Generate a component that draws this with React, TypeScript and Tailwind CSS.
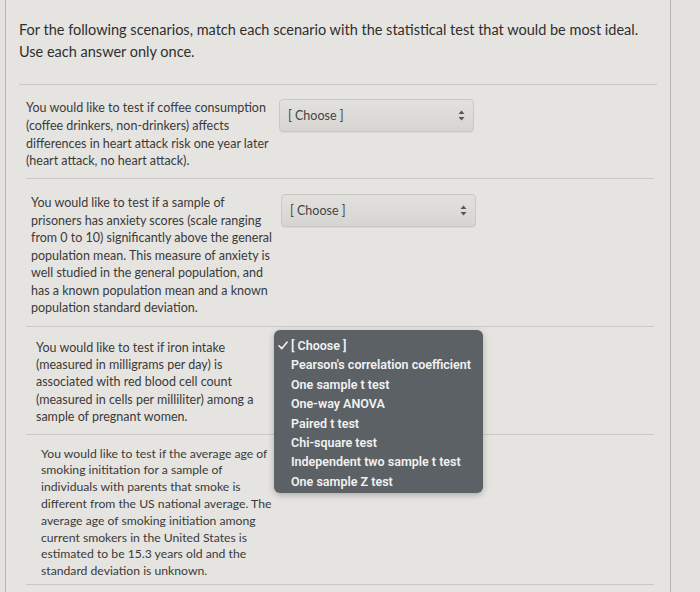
import React from "react";

function Select() {
  return (
    <div className="flex h-[33px] w-[195px] items-center justify-between rounded-[4px] border border-[#c9c8c4] bg-gradient-to-b from-[#e2e1de] to-[#d6d5d2] pl-[8px] pr-[8px] shadow-[0_1px_0_rgba(0,0,0,0.05)]">
      <span className="text-[12.5px] text-[#444]">[ Choose ]</span>
      <svg width="7" height="11" viewBox="0 0 7 11" className="text-[#555]">
        <path d="M3.5 0.5 L6.5 4 L0.5 4 Z" fill="currentColor" />
        <path d="M3.5 10.5 L6.5 7 L0.5 7 Z" fill="currentColor" />
      </svg>
    </div>
  );
}

function Lines({ lines }: { lines: string[] }) {
  return (
    <p>
      {lines.map((l, i) => (
        <React.Fragment key={i}>
          {l}
          {i < lines.length - 1 && <br />}
        </React.Fragment>
      ))}
    </p>
  );
}

const items = [
  "Pearson's correlation coefficient",
  "One sample t test",
  "One-way ANOVA",
  "Paired t test",
  "Chi-square test",
  "Independent two sample t test",
  "One sample Z test",
];

export default function App() {
  return (
    <div
      className="relative h-[592px] w-[700px] overflow-hidden bg-[#e4e2de]"
      style={{ fontFamily: "Lato, 'Open Sans', sans-serif" }}
    >
      <div className="ml-[5px] h-full w-[666px] border-l border-r border-[#b9b7b3] bg-[#e6e4e0]">
        <div className="px-[13px] pt-[19px] pb-[21px] text-[14.5px] leading-[22px] text-[#2f2f2f]">
          <p>For the following scenarios, match each scenario with the statistical test that would be most ideal.</p>
          <p>Use each answer only once.</p>
        </div>
        <div className="mx-[13px] border-t border-[#cbc9c5]" />

        <div className="ml-[20px] mr-[16px] text-[12.5px] text-[#3a3a3a]">
          <div className="flex border-b border-[#cbc9c5] pt-[14px] pb-[8px] leading-[17.8px]">
            <div className="w-[253px] shrink-0">
              <Lines
                lines={[
                  "You would like to test if coffee consumption",
                  "(coffee drinkers, non-drinkers) affects",
                  "differences in heart attack risk one year later",
                  "(heart attack, no heart attack).",
                ]}
              />
            </div>
            <Select />
          </div>

          <div className="flex border-b border-[#cbc9c5] pt-[15px] pb-[9px] leading-[17.5px]">
            <div className="w-[255px] shrink-0 pl-[5px]">
              <Lines
                lines={[
                  "You would like to test if a sample of",
                  "prisoners has anxiety scores (scale ranging",
                  "from 0 to 10) significantly above the general",
                  "population mean. This measure of anxiety is",
                  "well studied in the general population, and",
                  "has a known population mean and a known",
                  "population standard deviation.",
                ]}
              />
            </div>
            <Select />
          </div>

          <div className="flex border-b border-[#cbc9c5] pt-[12px] pb-[9px] leading-[17.3px]">
            <div className="h-[86px] w-[253px] shrink-0 pl-[10px]">
              <Lines
                lines={[
                  "You would like to test if iron intake",
                  "(measured in milligrams per day) is",
                  "associated with red blood cell count",
                  "(measured in cells per milliliter) among a",
                  "sample of pregnant women.",
                ]}
              />
            </div>
          </div>

          <div className="flex border-b border-[#cbc9c5] pt-[11px] pb-[4px] text-[12.2px] leading-[16.8px]">
            <div className="w-[253px] shrink-0 pl-[15px]">
              <Lines
                lines={[
                  "You would like to test if the average age of",
                  "smoking inititation for a sample of",
                  "individuals with parents that smoke is",
                  "different from the US national average. The",
                  "average age of smoking initiation among",
                  "current smokers in the United States is",
                  "estimated to be 15.3 years old and the",
                  "standard deviation is unknown.",
                ]}
              />
            </div>
          </div>
        </div>
      </div>

      <div
        className="absolute left-[274px] top-[330px] h-[163px] w-[209px] rounded-[6px] bg-[#5c6165] pt-[6px] text-[12.5px] font-semibold leading-[19.4px] text-[#f2f2f2] shadow-[0_2px_6px_rgba(0,0,0,0.25)]"
        style={{ fontFamily: "Roboto, 'Liberation Sans', sans-serif" }}
      >
        <div className="flex items-center pl-[4px]">
          <svg width="10" height="9" viewBox="0 0 10 9" className="mr-[3px]">
            <path d="M1 4.8 L3.8 7.6 L9 1.2" fill="none" stroke="#f2f2f2" strokeWidth="1.6" strokeLinecap="round" strokeLinejoin="round" />
          </svg>
          <span>[ Choose ]</span>
        </div>
        {items.map((t) => (
          <div key={t} className="pl-[17px]">
            {t}
          </div>
        ))}
      </div>
    </div>
  );
}
